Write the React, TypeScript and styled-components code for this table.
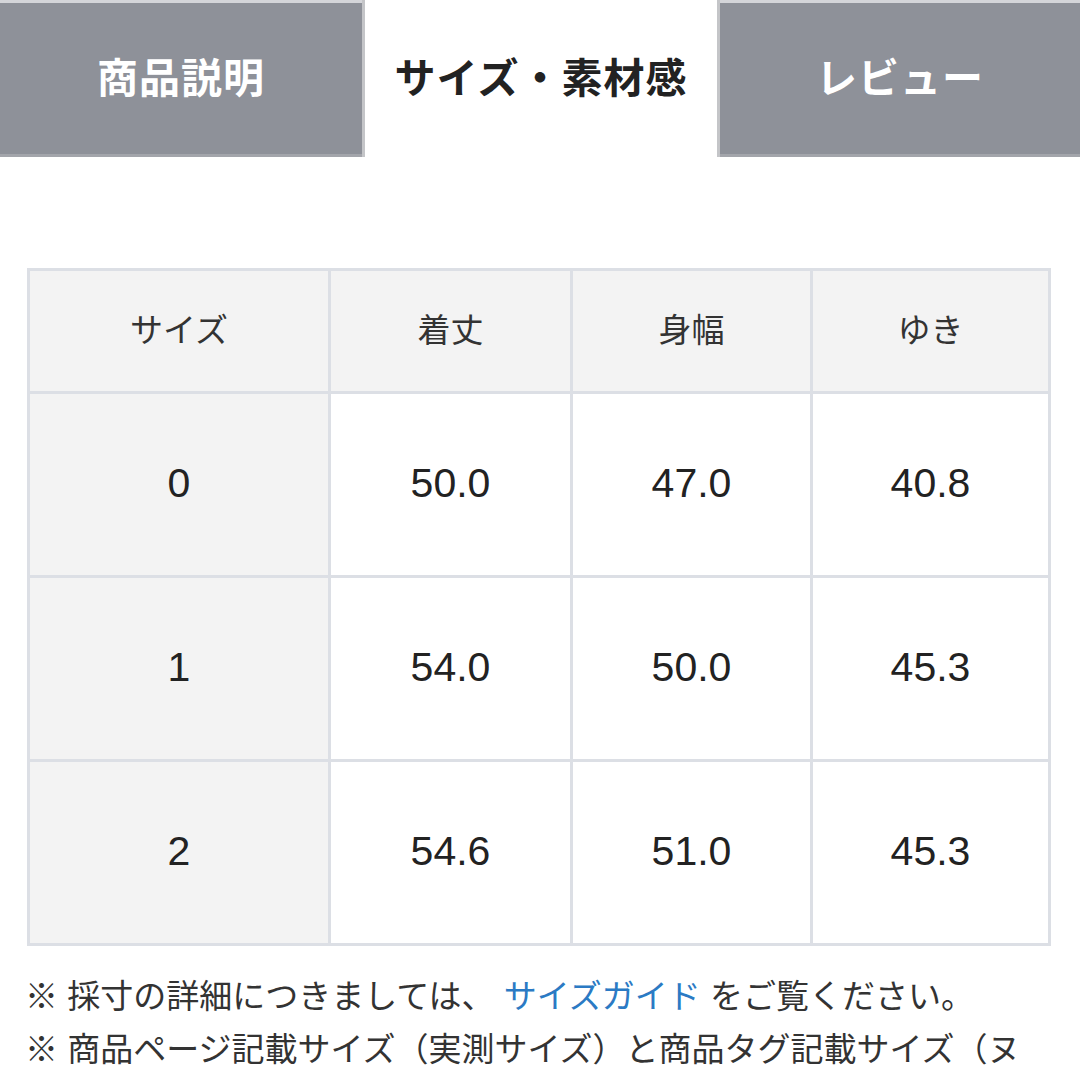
import React from "react";
import styled, { createGlobalStyle } from "styled-components";

const GlobalStyle = createGlobalStyle`
  html, body {
    margin: 0;
    padding: 0;
    background: #fff;
    font-family: "Liberation Sans", "Noto Sans CJK JP", sans-serif;
    color: #222;
  }
`;

const tabs = ["商品説明", "サイズ・素材感", "レビュー"];
const activeTab = 1;

const headers = ["サイズ", "着丈", "身幅", "ゆき"];
const rows = [
  ["0", "50.0", "47.0", "40.8"],
  ["1", "54.0", "50.0", "45.3"],
  ["2", "54.6", "51.0", "45.3"],
];

const App: React.FC = () => {
  return (
    <Page>
      <GlobalStyle />
      <TabBar>
        {tabs.map((label, i) => (
          <Tab key={label} $active={i === activeTab}>
            {label}
          </Tab>
        ))}
      </TabBar>

      <Content>
        <SizeTable>
          <thead>
            <tr>
              {headers.map((h) => (
                <HeadCell key={h}>{h}</HeadCell>
              ))}
            </tr>
          </thead>
          <tbody>
            {rows.map((row) => (
              <tr key={row[0]}>
                {row.map((value, i) => (
                  <BodyCell key={i} $label={i === 0}>
                    {value}
                  </BodyCell>
                ))}
              </tr>
            ))}
          </tbody>
        </SizeTable>

        <Notes>
          <Note>
            ※ 採寸の詳細につきましては、 <GuideLink href="#">サイズガイド</GuideLink>{" "}
            をご覧ください。
          </Note>
          <Note>
            ※
            商品ページ記載サイズ（実測サイズ）と商品タグ記載サイズ（ヌード寸法）は異なる場合がございます。
          </Note>
        </Notes>
      </Content>
    </Page>
  );
};

export default App;

const Page = styled.div`
  width: 1080px;
  height: 1080px;
  overflow: hidden;
`;

const TabBar = styled.div`
  display: grid;
  grid-template-columns: 362px 358px 360px;
  height: 157px;
`;

const Tab = styled.div<{ $active: boolean }>`
  display: flex;
  align-items: center;
  justify-content: center;
  box-sizing: border-box;
  font-size: 41px;
  font-weight: bold;
  letter-spacing: 1px;
  color: ${(p) => (p.$active ? "#222" : "#fff")};
  background: ${(p) => (p.$active ? "#fff" : "#8e9199")};
  border-top: ${(p) => (p.$active ? "none" : "3px solid #d4d5d9")};
  border-bottom: ${(p) => (p.$active ? "none" : "3px solid #a3a5ab")};
  border-left: ${(p) => (p.$active ? "3px solid #c4c5c8" : "none")};
  border-right: ${(p) => (p.$active ? "3px solid #c4c5c8" : "none")};
  padding-bottom: 8px;
`;

const Content = styled.div`
  padding: 111px 28px 0 27px;
`;

const SizeTable = styled.table`
  width: 1024px;
  border-collapse: collapse;
  table-layout: fixed;
  border: 3px solid #dcdfe5;

  th:nth-child(1),
  td:nth-child(1) {
    width: 298px;
  }
  th:nth-child(2),
  td:nth-child(2) {
    width: 239px;
  }
  th:nth-child(3),
  td:nth-child(3) {
    width: 237px;
  }
`;

const HeadCell = styled.th`
  height: 114px;
  padding: 0 0 6px;
  border: 3px solid #dcdfe5;
  background: #f3f3f3;
  font-size: 33px;
  font-weight: normal;
  color: #333;
  text-align: center;
  vertical-align: middle;
`;

const BodyCell = styled.td<{ $label: boolean }>`
  height: 179px;
  padding: 0 0 2px;
  border: 3px solid #dcdfe5;
  background: ${(p) => (p.$label ? "#f3f3f3" : "#fff")};
  font-size: 41px;
  color: #222;
  text-align: center;
  vertical-align: middle;
`;

const Notes = styled.div`
  margin-top: 24px;
  margin-left: -2px;
`;

const Note = styled.p`
  margin: 0;
  font-size: 33px;
  line-height: 53px;
  color: #333;
`;

const GuideLink = styled.a`
  color: #2b7ac4;
  text-decoration: none;
`;
